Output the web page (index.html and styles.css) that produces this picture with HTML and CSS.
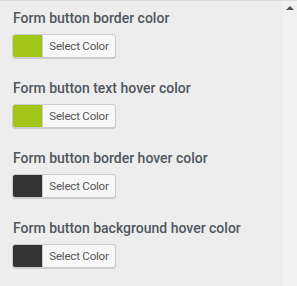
FILE: index.html
```html
<!DOCTYPE html>
<html lang="en">
<head>
    <meta charset="UTF-8">
    <meta name="viewport" content="width=device-width, initial-scale=1.0">
    <title>Form button colors</title>
    <link rel="stylesheet" href="styles.css">
</head>
<body>
    <div class="panel">
        <div class="controls">
            <div class="control">
                <span class="control-title">Form button border color</span>
                <button class="color-btn">
                    <span class="swatch swatch-green"></span>
                    <span class="color-label">Select Color</span>
                </button>
            </div>
            <div class="control">
                <span class="control-title">Form button text hover color</span>
                <button class="color-btn">
                    <span class="swatch swatch-green"></span>
                    <span class="color-label">Select Color</span>
                </button>
            </div>
            <div class="control">
                <span class="control-title">Form button border hover color</span>
                <button class="color-btn">
                    <span class="swatch swatch-dark"></span>
                    <span class="color-label">Select Color</span>
                </button>
            </div>
            <div class="control">
                <span class="control-title">Form button background hover color</span>
                <button class="color-btn">
                    <span class="swatch swatch-dark"></span>
                    <span class="color-label">Select Color</span>
                </button>
            </div>
        </div>
        <div class="scrollbar">
            <span class="scroll-arrow"></span>
        </div>
    </div>
</body>
</html>
```

FILE: styles.css
```css
* {
    box-sizing: border-box;
    margin: 0;
    padding: 0;
}

html, body {
    height: 100%;
}

body {
    font-family: Roboto, "Liberation Sans", sans-serif;
    background-color: #ededed;
    color: #50575e;
    overflow: hidden;
}

.panel {
    display: flex;
    height: 100%;
    border-top: 1px solid #dcdcdc;
}

.controls {
    flex: 1;
    padding: 7px 0 0 12px;
}

.control {
    margin-bottom: 20px;
}

.control-title {
    display: block;
    font-size: 14px;
    font-weight: 500;
    line-height: 20px;
    margin-bottom: 6px;
    padding-left: 1px;
}

.color-btn {
    display: flex;
    align-items: stretch;
    height: 24px;
    width: 104px;
    background: #f7f7f7;
    border: 1px solid #cccccc;
    border-radius: 3px;
    box-shadow: 0 1px 0 #cccccc;
    font-family: inherit;
    cursor: pointer;
    overflow: hidden;
}

.swatch {
    width: 30px;
    border-right: 1px solid #cccccc;
}

.swatch-green {
    background-color: #a1c518;
}

.swatch-dark {
    background-color: #333333;
}

.color-label {
    flex: 1;
    font-size: 11.5px;
    letter-spacing: -0.2px;
    line-height: 22px;
    color: #555555;
    text-align: center;
}

.scrollbar {
    width: 14px;
    background-color: #f1f1f1;
    display: flex;
    justify-content: center;
    padding-top: 5px;
}

.scroll-arrow {
    width: 0;
    height: 0;
    border-left: 4px solid transparent;
    border-right: 4px solid transparent;
    border-bottom: 4px solid #505050;
}
```
